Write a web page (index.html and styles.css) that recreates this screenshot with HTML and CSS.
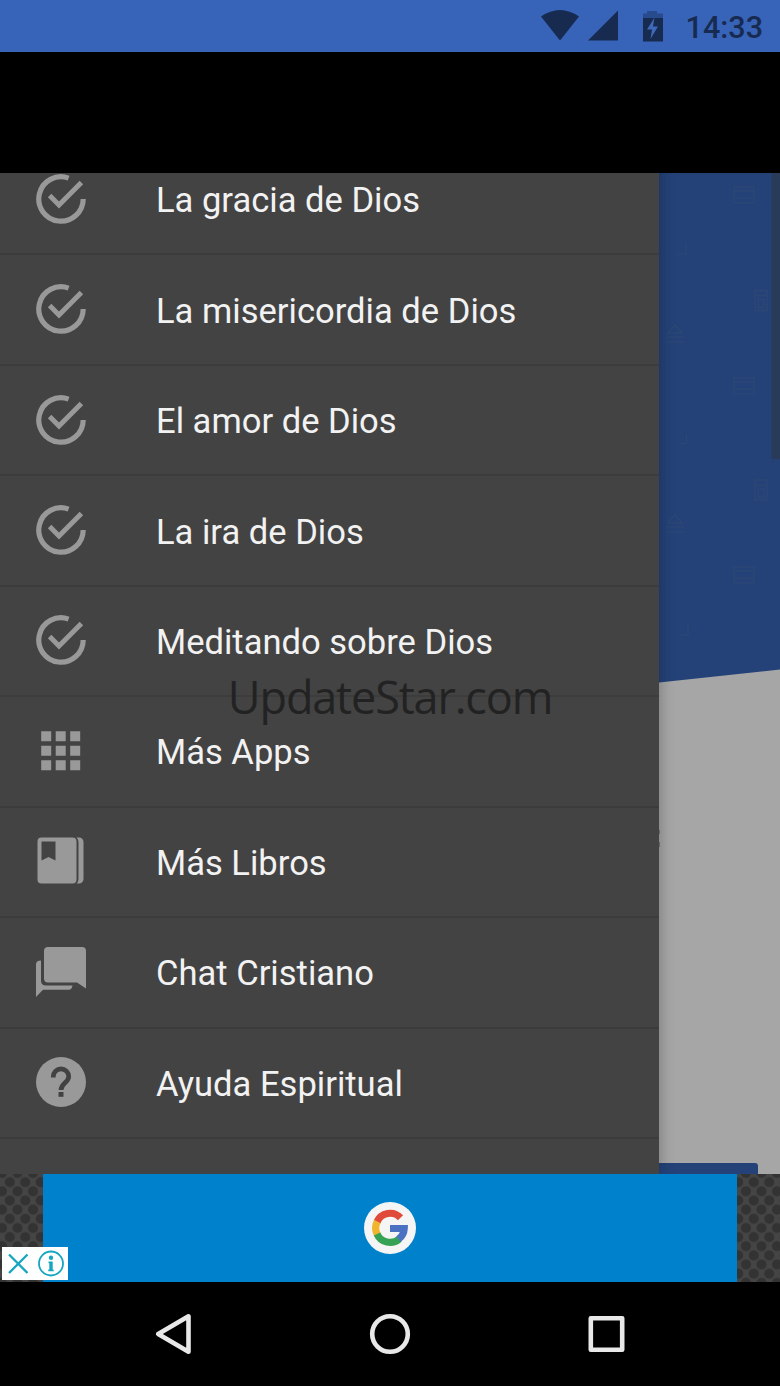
FILE: index.html
```html
<!DOCTYPE html>
<html lang="es">
<head>
<meta charset="utf-8">
<title>Menú</title>
<link rel="stylesheet" href="styles.css">
</head>
<body>
<svg class="defs" width="0" height="0">
  <symbol id="check" viewBox="0 0 50 50">
    <path d="M47.2 25A22.2 22.2 0 1 1 32.6 4.1" fill="none" stroke="currentColor" stroke-width="5.2"/>
    <path d="M13.6 21.600L23 31L45.400 8.600" fill="none" stroke="currentColor" stroke-width="5"/>
  </symbol>
  <symbol id="envelope" viewBox="0 0 22 18"><path d="M1 1h20v16H1zM1 5h20M1 12h20" fill="none" stroke="currentColor" stroke-width="1.5"/></symbol>
  <symbol id="doc" viewBox="0 0 14 22"><path d="M1 1h12v20H1zM1 6h12M4 10h6v8H4z" fill="none" stroke="currentColor" stroke-width="1.5"/></symbol>
  <symbol id="stack" viewBox="0 0 20 20"><path d="M10 2l7 8H3zM1 14h18M1 19h18" fill="none" stroke="currentColor" stroke-width="1.6"/></symbol>
  <symbol id="pen" viewBox="0 0 14 14"><path d="M11 1v11H3" fill="none" stroke="currentColor" stroke-width="1.5"/></symbol>
</svg>
<div class="phone">
  <header class="status">
    <svg class="status-icons" width="130" height="52" viewBox="0 0 130 52">
      <path d="M1 16.5Q20 3.500 39 16.500L20 40.500z" fill="#172a50"/>
      <path d="M78 10.500V40.500H48z" fill="#172a50"/>
      <path d="M107 11h10v2.500h6v5h-20v-5h4z" fill="#284b8e"/>
      <path d="M103 18h20v23.500h-20z" fill="#172a50"/>
      <path d="M114.500 17.500l-7.500 12h5l-1.500 9.500 7.500-12.500h-5z" fill="#3e69b8"/>
    </svg>
    <span class="clock">14:33</span>
  </header>
  <div class="toolbar"></div>
  <main class="stage">
    <div class="page">
      <svg class="hero" width="121" height="1001" viewBox="0 0 121 1001">
        <path d="M0 0h121v496.500L0 509.500z" fill="#244278"/>
        <g color="#2a4775">
          <use href="#envelope" x="74" y="13" width="22" height="18"/>
          <use href="#pen" x="16" y="69" width="14" height="14"/>
          <use href="#doc" x="95" y="116" width="14" height="23"/>
          <use href="#stack" x="6" y="150" width="20" height="20"/>
          <use href="#envelope" x="74" y="203" width="22" height="20"/>
          <use href="#pen" x="18" y="259" width="12" height="14"/>
          <use href="#doc" x="95" y="306" width="14" height="22"/>
          <use href="#stack" x="6" y="340" width="20" height="20"/>
          <use href="#envelope" x="74" y="393" width="22" height="18"/>
          <use href="#pen" x="18" y="450" width="14" height="14"/>
        </g>
        <path d="M112.500 0h8.500v286h-8.500z" fill="#2a3b5a"/>
        <path d="M0 990h96q3 0 3 3v8H0z" fill="#244278"/>
        <path d="M0 657v4M0 669v5" stroke="#666" stroke-width="1.500"/>
      </svg>
    </div>
    <nav class="drawer">
      <a class="item"><svg class="icon" viewBox="0 0 50 50"><use href="#check"/></svg><span>La gracia de Dios</span></a>
      <a class="item"><svg class="icon" viewBox="0 0 50 50"><use href="#check"/></svg><span>La misericordia de Dios</span></a>
      <a class="item"><svg class="icon" viewBox="0 0 50 50"><use href="#check"/></svg><span>El amor de Dios</span></a>
      <a class="item"><svg class="icon" viewBox="0 0 50 50"><use href="#check"/></svg><span>La ira de Dios</span></a>
      <a class="item"><svg class="icon" viewBox="0 0 50 50"><use href="#check"/></svg><span>Meditando sobre Dios</span></a>
      <a class="item"><svg class="icon" viewBox="0 0 50 50"><path fill="currentColor" d="M5.200 5.200h10v10h-10zM19.700 5.200h10v10h-10zM34.200 5.200h10v10h-10zM5.200 19.700h10v10h-10zM19.700 19.700h10v10h-10zM34.200 19.700h10v10h-10zM5.200 34.200h10v10h-10zM19.700 34.200h10v10h-10zM34.200 34.200h10v10h-10z"/></svg><span>Más Apps</span></a>
      <a class="item"><svg class="icon" viewBox="0 0 50 50"><path fill="currentColor" fill-rule="evenodd" d="M5.500 1.500h31a4 4 0 0 1 4 4v38a4 4 0 0 1-4 4h-31a4 4 0 0 1-4-4v-38a4 4 0 0 1 4-4zM5.500 5.500v19l7-3.500 7 3.500v-19z"/><path fill="currentColor" d="M40.500 1.500h2.500a4.500 4.500 0 0 1 4.500 4.500v37a4.500 4.500 0 0 1-4.500 4.500h-2.500q2-1.500 2-4.500v-37q0-3-2-4.500z"/></svg><span>Más Libros</span></a>
      <a class="item"><svg class="icon" viewBox="0 0 50 50"><path fill="currentColor" d="M12 0h34a4 4 0 0 1 4 4v37.500l-9-6H12a4 4 0 0 1-4-4V4a4 4 0 0 1 4-4z"/><path fill="currentColor" d="M5 13.500v20q0 5 5 5h26.500q-.5 4.200-4 4.200H7L0 50V17.500q0-4 5-4z"/></svg><span>Chat Cristiano</span></a>
      <a class="item"><svg class="icon" viewBox="0 0 50 50"><circle cx="25" cy="25" r="25" fill="currentColor"/><path d="M17.300 20.500v-1a7.700 7.700 0 0 1 15.400 0c0 6-7.700 6.500-7.700 13.500" fill="none" stroke="#424242" stroke-width="4.700"/><path d="M22.500 35h5v4.800h-5z" fill="#424242"/></svg><span>Ayuda Espiritual</span></a>
    </nav>
    <div class="watermark">UpdateStar.com</div>
  </main>
  <section class="ad">
    <div class="banner">
      <svg width="54" height="54" viewBox="0 0 54 54">
        <circle cx="27" cy="27" r="26" fill="#f5f5f5"/>
        <g fill="none" stroke-width="7.200">
          <path d="M14 21A14.300 14.300 0 0 1 37.500 16.700" stroke="#e04a3b"/>
          <path d="M14.300 33.500A14.300 14.300 0 0 1 14.300 20.500" stroke="#f0b52c"/>
          <path d="M36.300 38A14.300 14.300 0 0 1 14 33" stroke="#35a353"/>
          <path d="M27 27.500H41.200A14.300 14.300 0 0 1 35.500 38.200" stroke="#4b72c2"/>
        </g>
      </svg>
    </div>
    <svg class="ad-badge" width="66" height="33" viewBox="0 0 66 33">
      <path d="M0 0h66v33H0z" fill="#fff"/>
      <path d="M7 7.500l18.500 18.500M25.500 7.500L7 26" fill="none" stroke="#17a6c0" stroke-width="2.300"/>
      <circle cx="49" cy="16.500" r="12" fill="none" stroke="#17a6c0" stroke-width="1.800"/>
      <circle cx="49" cy="10.700" r="2.200" fill="#17a6c0"/>
      <path d="M46.500 14.500h4.200v8h1v1.800h-5.400v-1.800h1v-6.200h-.8z" fill="#17a6c0"/>
    </svg>
  </section>
  <footer class="navbar">
    <svg width="40" height="44" viewBox="0 0 40 44"><path d="M5.200 22L35.500 4.300V39.700z"/></svg>
    <svg width="44" height="44" viewBox="0 0 44 44"><circle cx="22" cy="22" r="17.800"/></svg>
    <svg width="40" height="44" viewBox="0 0 40 44"><path d="M4.800 6.300h31.400v31.400H4.800z"/></svg>
  </footer>
</div>
</body>
</html>
```

FILE: styles.css
```css
body {
  margin: 0;
  background: #000;
  font-family: Roboto, "Liberation Sans", sans-serif;
}

.defs {
  position: absolute;
}

.phone {
  display: flex;
  flex-direction: column;
  width: 780px;
  height: 1386px;
  overflow: hidden;
}

.status {
  display: flex;
  align-items: center;
  justify-content: flex-end;
  height: 52px;
  padding-right: 17px;
  background: #3763b8;
}

.status-icons {
  margin-right: 16px;
}

.clock {
  color: #172a50;
  font-size: 30.500px;
  font-weight: 500;
  line-height: 52px;
  padding-top: 3px;
}

.toolbar {
  height: 121px;
  background: #000;
}

.stage {
  position: relative;
  height: 1001px;
  overflow: hidden;
  background: #a6a6a6;
}

.page {
  display: flex;
  justify-content: flex-end;
}

.drawer {
  position: absolute;
  top: -28px;
  left: 0;
  width: 659px;
  height: 1029px;
  background: #434343;
  box-shadow: 0 0 14px rgba(0, 0, 0, 0.3);
}

.item {
  display: flex;
  align-items: center;
  gap: 71px;
  box-sizing: border-box;
  height: 110.45px;
  padding: 0 0 1px 35.500px;
  border-bottom: 2px solid #3c3c3c;
  color: #f2f2f2;
  font-size: 34.550px;
  line-height: 44px;
  white-space: nowrap;
}

.item span {
  padding-top: 3px;
  margin-left: -0.5px;
}

.icon {
  flex: none;
  width: 50px;
  height: 50px;
  color: #999;
}

.watermark {
  position: absolute;
  top: 494px;
  left: 0;
  width: 780px;
  text-align: center;
  color: #222;
  font: 45px/60px "Open Sans", sans-serif;
  letter-spacing: -1.150px;
}

.ad {
  position: relative;
  display: flex;
  justify-content: center;
  height: 108px;
  background-color: #454545;
  background-image:
    radial-gradient(circle, #333 4.500px, transparent 5.500px),
    radial-gradient(circle, #333 4.500px, transparent 5.500px);
  background-size: 15.500px 18.300px;
  background-position: 2px -1px, 9.750px 8.150px;
}

.banner {
  display: flex;
  align-items: center;
  justify-content: center;
  width: 694px;
  background: #0081cb;
}

.ad-badge {
  position: absolute;
  left: 2px;
  bottom: 2px;
}

.navbar {
  display: flex;
  align-items: center;
  justify-content: space-between;
  height: 104px;
  padding: 0 154px 0 153px;
}

.navbar svg {
  fill: none;
  stroke: #e8e8e8;
  stroke-width: 4.600px;
  stroke-linejoin: round;
}
```
